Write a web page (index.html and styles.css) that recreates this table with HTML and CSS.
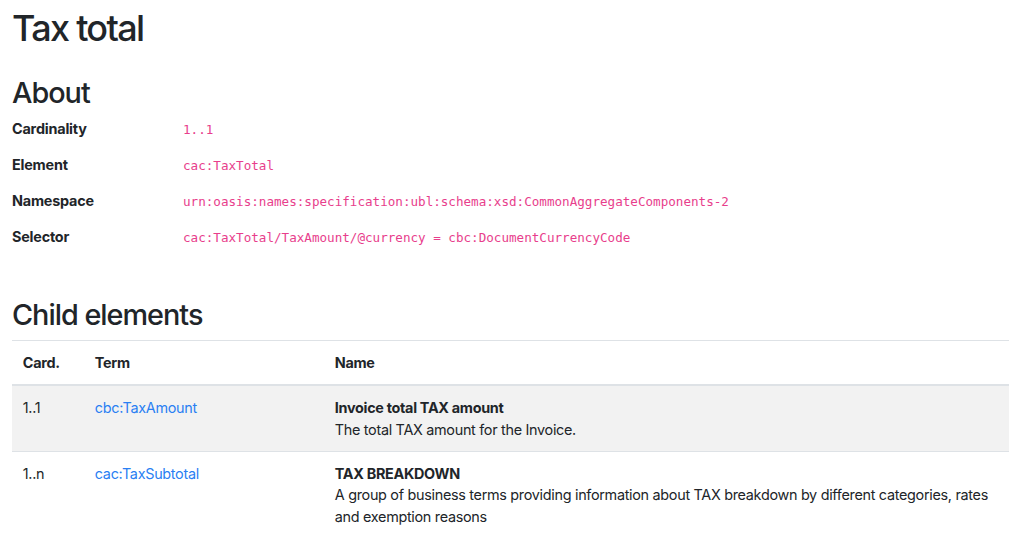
FILE: index.html
```html
<!DOCTYPE html>
<html lang="en">
<head>
<meta charset="utf-8">
<title>Tax total</title>
<link rel="stylesheet" href="styles.css">
</head>
<body>
<main class="page">
  <h1 class="title">Tax total</h1>

  <h2 class="section-title about-title">About</h2>
  <dl class="props">
    <div class="prop-row">
      <dt class="prop-label">Cardinality</dt>
      <dd class="prop-value"><code>1..1</code></dd>
    </div>
    <div class="prop-row">
      <dt class="prop-label">Element</dt>
      <dd class="prop-value"><code>cac:TaxTotal</code></dd>
    </div>
    <div class="prop-row">
      <dt class="prop-label">Namespace</dt>
      <dd class="prop-value"><code>urn:oasis:names:specification:ubl:schema:xsd:CommonAggregateComponents-2</code></dd>
    </div>
    <div class="prop-row">
      <dt class="prop-label">Selector</dt>
      <dd class="prop-value"><code>cac:TaxTotal/TaxAmount/@currency = cbc:DocumentCurrencyCode</code></dd>
    </div>
  </dl>

  <h2 class="section-title child-title">Child elements</h2>
  <table class="children">
    <thead>
      <tr>
        <th class="col-card">Card.</th>
        <th class="col-term">Term</th>
        <th class="col-name">Name</th>
      </tr>
    </thead>
    <tbody>
      <tr class="striped">
        <td>1..1</td>
        <td><a class="term-link" href="#">cbc:TaxAmount</a></td>
        <td><strong class="term-name">Invoice total TAX amount</strong><br>The total TAX amount for the Invoice.</td>
      </tr>
      <tr>
        <td>1..n</td>
        <td><a class="term-link" href="#">cac:TaxSubtotal</a></td>
        <td><strong class="term-name">TAX BREAKDOWN</strong><br>A group of business terms providing information about TAX breakdown by different categories, rates and exemption reasons</td>
      </tr>
    </tbody>
  </table>
</main>
</body>
</html>
```

FILE: styles.css
```css
* { box-sizing: border-box; }

html, body {
  margin: 0;
  padding: 0;
  background: #fff;
}

body {
  font-family: Inter, "Noto Sans", "Liberation Sans", sans-serif;
  font-size: 14.4px;
  line-height: 1.5;
  letter-spacing: -0.3px;
  color: #212529;
}

.page {
  padding: 7px 15px 0 12px;
}

.title {
  margin: 0 0 7.2px;
  font-size: 36px;
  font-weight: 500;
  line-height: 1.2;
  letter-spacing: -1.7px;
}

.section-title {
  margin: 0 0 7.2px;
  font-size: 28.8px;
  font-weight: 500;
  line-height: 1.2;
  letter-spacing: -1px;
}

.about-title { margin-top: 26px; }

.props {
  margin: 0 0 36px;
}

.prop-row {
  display: flex;
  padding-bottom: 14.2px;
}

.prop-label {
  width: 171px;
  flex: none;
  font-weight: 700;
  letter-spacing: -0.2px;
}

.prop-value {
  margin: 0;
}

code {
  font-family: "DejaVu Sans Mono", "Liberation Mono", monospace;
  font-size: 12.6px;
  letter-spacing: 0;
  color: #e83e8c;
}

.child-title { margin-top: 0; }

.children {
  width: 100%;
  border-collapse: collapse;
}

.children th,
.children td {
  padding: 10.8px;
  text-align: left;
  vertical-align: top;
  border-top: 1px solid #dee2e6;
}

.children th {
  font-weight: 700;
}

.children thead th {
  border-bottom: 2px solid #dee2e6;
}

.col-card { width: 72px; }
.col-term { width: 240px; }

.striped td { background: #f2f2f2; }

.term-link {
  color: #2a7ff3;
  text-decoration: none;
}

.term-name { font-weight: 700; }
```
